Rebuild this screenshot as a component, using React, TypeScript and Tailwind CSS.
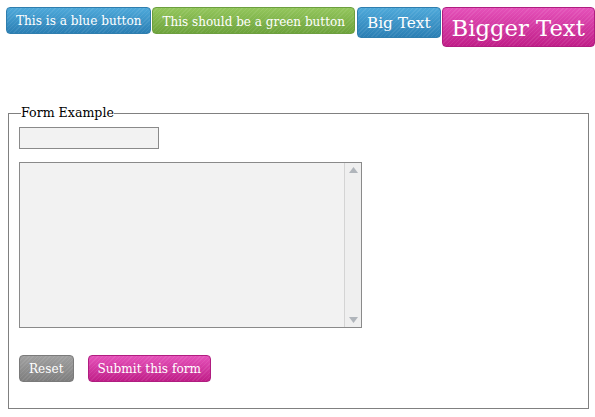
import React from "react";

export default function App() {
  return (
    <div className="min-h-[417px] w-[595px] bg-white font-['DejaVu_Serif',serif] text-black">
      <div className="flex items-start whitespace-nowrap pl-[6px] pt-[7px]">
        <button className="h-[27px] shrink-0 rounded-[4px] border border-[#2f7eae] bg-[image:repeating-linear-gradient(-45deg,rgba(255,255,255,0.08)_0_1px,transparent_1px_3px),linear-gradient(#4ea9da,#2b7fb4)] px-[9px] pt-[2px] text-[12.1px] text-white">
          This is a blue button
        </button>
        <button className="ml-px h-[27px] shrink-0 rounded-[4px] border border-[#6c9f3e] bg-[image:repeating-linear-gradient(-45deg,rgba(255,255,255,0.08)_0_1px,transparent_1px_3px),linear-gradient(#93c65c,#6ea33c)] px-[9px] pt-[2px] text-[12px] text-white">
          This should be a green button
        </button>
        <button className="ml-[2px] h-[31px] shrink-0 rounded-[4px] border border-[#2f7eae] bg-[image:repeating-linear-gradient(-45deg,rgba(255,255,255,0.08)_0_1px,transparent_1px_3px),linear-gradient(#4ea9da,#2b7fb4)] px-[9px] pt-[2px] text-[15.3px] text-white">
          Big Text
        </button>
        <button className="ml-px h-[40px] shrink-0 rounded-[4px] border border-[#b01d80] bg-[image:repeating-linear-gradient(-45deg,rgba(255,255,255,0.08)_0_1px,transparent_1px_3px),linear-gradient(#e552ba,#c01e88)] px-[9px] pt-[2px] text-[22.7px] text-white">
          Bigger Text
        </button>
      </div>

      <fieldset className="mx-[8px] mt-[58px] h-[304px] w-[581px] border border-[#808080] pl-[10px] pt-0">
        <legend className="ml-[2px] text-[12.6px] leading-[16px]">Form Example</legend>
        <input
          type="text"
          className="mt-[6px] block h-[22px] w-[140px] border border-[#8a8a8a] bg-[#f2f2f2]"
        />
        <div className="mt-[13px] flex h-[166px] w-[343px] border border-[#8a8a8a] bg-[#f2f2f2]">
          <div className="flex-1" />
          <div className="flex w-[17px] flex-col items-center justify-between border-l border-[#d4d4d4] bg-[#efefef] py-[4px]">
            <svg width="9" height="6" viewBox="0 0 9 6">
              <path d="M4.5 0 L9 6 L0 6 Z" fill="#b0b5bb" />
            </svg>
            <svg width="9" height="6" viewBox="0 0 9 6">
              <path d="M0 0 L9 0 L4.5 6 Z" fill="#b0b5bb" />
            </svg>
          </div>
        </div>
        <div className="mt-[27px] flex gap-[14px]">
          <button className="h-[27px] rounded-[4px] border border-[#7a7a7a] bg-[image:repeating-linear-gradient(-45deg,rgba(255,255,255,0.08)_0_1px,transparent_1px_3px),linear-gradient(#a0a0a0,#7e7e7e)] px-[9px] pt-[2px] text-[12.1px] text-white">
            Reset
          </button>
          <button className="h-[27px] rounded-[4px] border border-[#b01d80] bg-[image:repeating-linear-gradient(-45deg,rgba(255,255,255,0.08)_0_1px,transparent_1px_3px),linear-gradient(#e552ba,#c01e88)] px-[9px] pt-[2px] text-[12.1px] text-white">
            Submit this form
          </button>
        </div>
      </fieldset>
    </div>
  );
}
